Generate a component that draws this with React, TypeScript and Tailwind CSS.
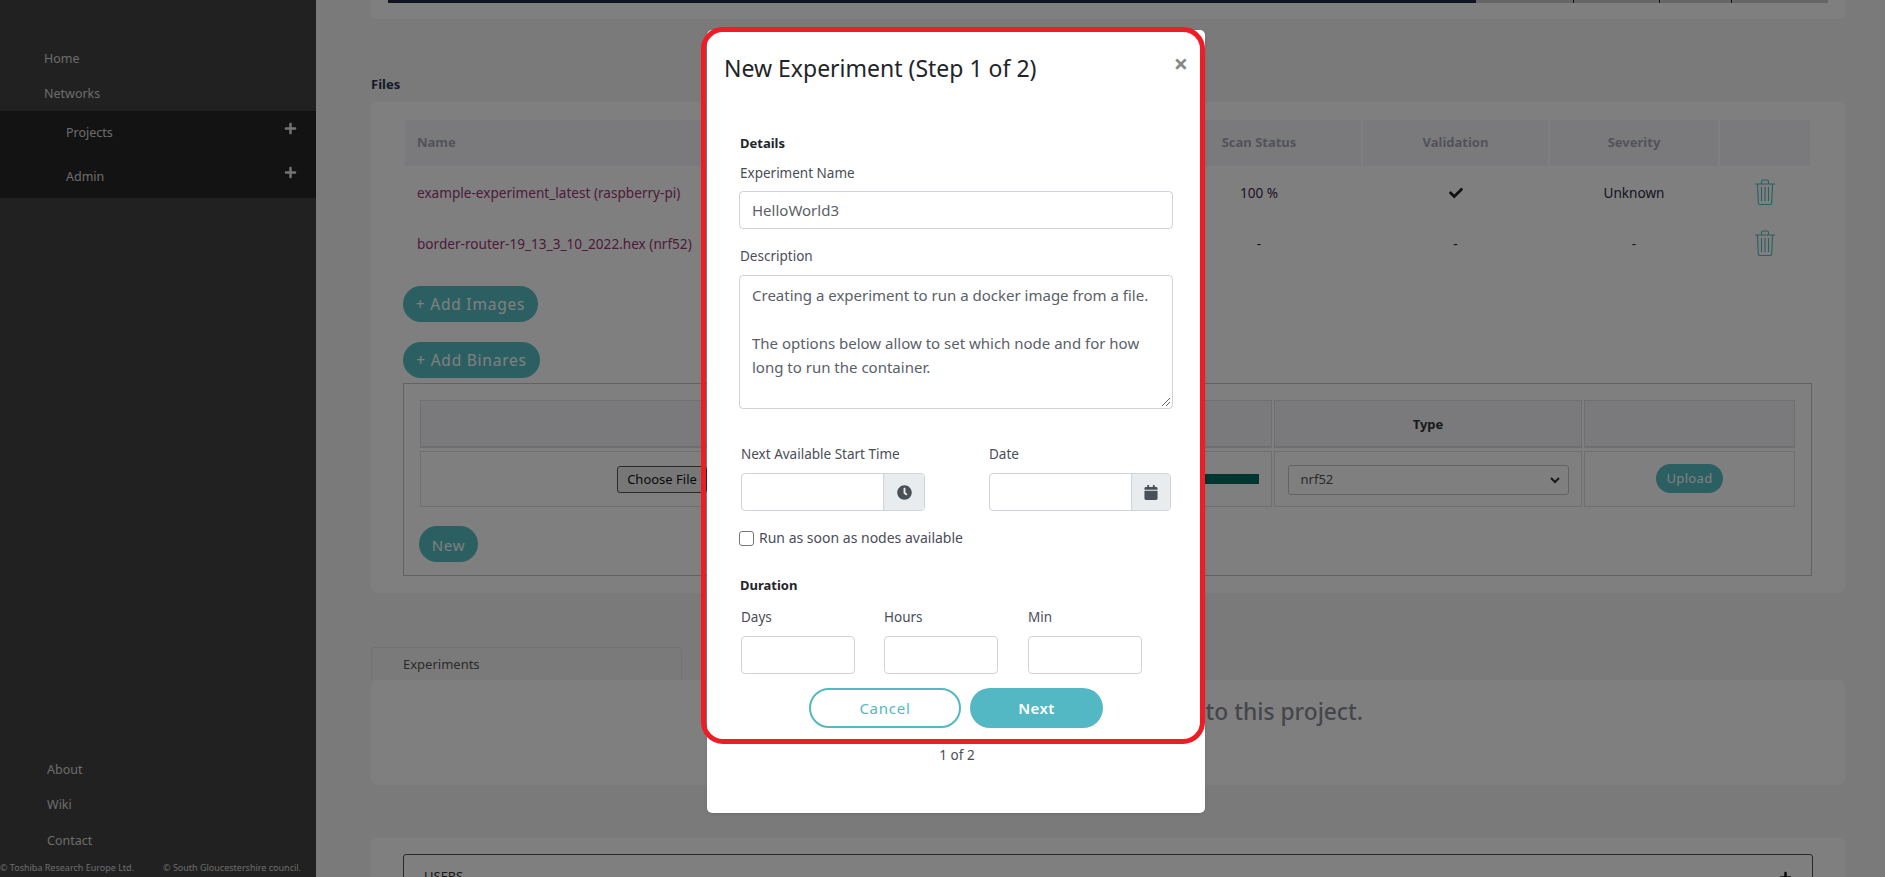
import { FaCalendar, FaCheck, FaClock, FaPlus } from "react-icons/fa";

const sans = "font-['Noto_Sans','Open_Sans',sans-serif]";

const fileRows = [
  { name: "example-experiment_latest (raspberry-pi)", scan: "100 %", ok: true, severity: "Unknown" },
  { name: "border-router-19_13_3_10_2022.hex (nrf52)", scan: "-", ok: false, severity: "-" },
];

function TrashIcon() {
  return (
    <svg width="20" height="26" viewBox="0 0 20 26" fill="none" stroke="#58bec5" strokeWidth="1.100">
      <path d="M0 5h20M6.500 5V2.500q0-1.500 1.500-1.500h4q1.500 0 1.500 1.500V5" />
      <path d="M2.500 5l.8 19q0 1.500 1.500 1.500h10.400q1.500 0 1.500-1.500l.8-19" />
      <path d="M6.500 8v14M10 8v14M13.500 8v14" />
    </svg>
  );
}

function PillButton({ children, className }: { children: React.ReactNode; className: string }) {
  return (
    <button className={`flex items-center justify-center rounded-full bg-[#58bec5] text-white ${className}`}>
      {children}
    </button>
  );
}

function Sidebar() {
  return (
    <aside className="w-[316px] shrink-0 h-full bg-[#424242] flex flex-col text-[12.500px] text-[#d8d8d8]">
      <div className="h-[42px]" />
      <a className="h-[35px] pl-[44px] flex items-center">Home</a>
      <a className="h-[34px] pl-[44px] flex items-center">Networks</a>
      <div className="h-[87px] bg-[#262626]">
        <div className="h-[44px] pl-[66px] pr-[19px] flex items-center justify-between">
          <span>Projects</span>
          <FaPlus className="w-[13px] h-[13px] text-[#e8e8e8] mb-[10px]" />
        </div>
        <div className="h-[43px] pl-[66px] pr-[19px] pt-[1px] flex items-center justify-between">
          <span>Admin</span>
          <FaPlus className="w-[13px] h-[13px] text-[#e8e8e8] mb-[10px]" />
        </div>
      </div>
      <div className="flex-1" />
      <a className="h-[35px] pl-[47px] flex items-center">About</a>
      <a className="h-[35px] pl-[47px] flex items-center">Wiki</a>
      <a className="h-[36px] pl-[47px] flex items-center">Contact</a>
      <div className="h-[18px] flex items-center gap-[29px] text-[9px] whitespace-nowrap">
        <span>© Toshiba Research Europe Ltd.</span>
        <span>© South Gloucestershire council.</span>
      </div>
    </aside>
  );
}

function FilesCard() {
  return (
    <div className="mt-[9px] h-[491px] bg-white rounded-md pt-[18px] pl-[32px] pr-[33px]">
      <div className="ml-[2px] grid grid-cols-[750px_204px_185px_168px_90px] gap-x-[2px] text-[13.600px]">
        <div className="h-[46px] bg-[#f5f5f9] pl-[12px] flex items-center text-[13px] font-bold text-[#a5a7b5]">Name</div>
        {["Scan Status", "Validation", "Severity", ""].map((h) => (
          <div key={h} className="h-[46px] bg-[#f5f5f9] flex items-center justify-center text-[13px] font-bold text-[#a5a7b5]">{h}</div>
        ))}
        {fileRows.map((r) => (
          <div key={r.name} className="contents">
            <div className="h-[51px] pt-[3px] pl-[12px] flex items-center text-[#9c3576] whitespace-nowrap">{r.name}</div>
            <div className="h-[51px] pt-[3px] flex items-center justify-center text-[#3a2a4a]">{r.scan}</div>
            <div className="h-[51px] pt-[3px] flex items-center justify-center text-[#222]">
              {r.ok ? <FaCheck className="w-[14px] h-[14px]" /> : "-"}
            </div>
            <div className="h-[51px] pt-[3px] flex items-center justify-center text-[#2a2a3a]">{r.severity}</div>
            <div className="h-[51px] flex items-center justify-center"><TrashIcon /></div>
          </div>
        ))}
      </div>
      <PillButton className="mt-[18px] w-[135px] h-[36px] pt-[2px] text-[15.500px] tracking-wider">+ Add Images</PillButton>
      <PillButton className="mt-[20px] w-[137px] h-[36px] pt-[2px] text-[15.500px] tracking-wider">+ Add Binares</PillButton>
      <div className="mt-[5px] h-[193px] border border-[#c4c4c4] pt-[16px] px-[16px]">
        <div className="grid grid-cols-[852px_308px_211px] gap-x-[2px] gap-y-[3px] w-[1375px]">
          <div className="h-[48px] bg-[#f5f5f9] border border-[#dedee2] border-b-2" />
          <div className="h-[48px] pt-[2px] bg-[#f5f5f9] border border-[#dedee2] border-b-2 flex items-center justify-center text-[13px] font-bold text-[#333]">Type</div>
          <div className="h-[48px] bg-[#f5f5f9] border border-[#dedee2] border-b-2" />
          <div className="h-[56px] border border-[#dedee2] flex items-center pl-[196px] pr-[12px]">
            <button className="h-[27px] w-[90px] pt-[1px] border border-[#555] rounded-[3px] bg-[#efefef] text-[13px] text-[#111]">Choose File</button>
            <div className="flex-1" />
            <div className="w-[400px] h-[10px] bg-[#006a60]" />
          </div>
          <div className="h-[56px] border border-[#dedee2] flex items-center justify-center">
            <div className="mt-[2px] w-[281px] h-[30px] border border-[#c6c6c8] rounded-[3px] pl-[12px] pr-[8px] flex items-center justify-between text-[13px] text-[#555]">
              nrf52
              <svg width="10" height="8" viewBox="0 0 10 8" fill="none" stroke="#333" strokeWidth="2"><path d="M1 2l4 4 4-4" /></svg>
            </div>
          </div>
          <div className="h-[56px] border border-[#dedee2] flex items-center justify-center">
            <PillButton className="w-[67px] h-[29px] text-[13px] tracking-wide mb-[1px]">Upload</PillButton>
          </div>
        </div>
        <PillButton className="mt-[19px] -ml-[1px] w-[59px] h-[36px] pt-[2px] text-[15px] tracking-wider">New</PillButton>
      </div>
    </div>
  );
}

function Backdrop() {
  return (
    <main className={`flex-1 h-full bg-[#f7f5f5] pl-[55px] pr-[40px] ${sans}`}>
      <div className="h-[19px] bg-white rounded-b-md px-[17px]">
        <div className="h-[3px] flex bg-[#1c2a3c]">
          <div className="w-[1088px]" />
          <div className="flex-1 bg-[#cccccc] flex">
            <div className="w-[98px] border-r border-[#222]" />
            <div className="w-[86px] border-r border-[#222]" />
            <div className="w-[72px] border-r border-[#222]" />
          </div>
        </div>
      </div>
      <p className="mt-[56px] h-[18px] text-[13px] leading-[18px] font-bold text-[#2a3350]">Files</p>
      <FilesCard />
      <div className="mt-[54px] ml-0 w-[311px] h-[33px] pt-[1px] border border-b-0 border-[#e6e6e6] rounded-t-[3px] pl-[31px] flex items-center text-[13px] text-[#555]">Experiments</div>
      <div className="h-[105px] bg-white rounded-md flex justify-end pr-[482px] pt-[15px] text-[22.800px] font-medium text-[#8b8b99] whitespace-nowrap">
        to this project.
      </div>
      <div className="mt-[53px] h-[60px] bg-white rounded-t-md pt-[16px] px-[32px]">
        <div className="h-[60px] border border-[#555] rounded-t-[3px] pl-[20px] pr-[20px] pt-[12px] flex justify-between text-[13px] text-[#333]">
          USERS
          <FaPlus className="w-[13px] h-[13px] text-[#111] mt-[4px]" />
        </div>
      </div>
    </main>
  );
}

function FieldLabel({ children, className }: { children: React.ReactNode; className?: string }) {
  return <p className={`text-[13.500px] leading-[18px] text-[#4a4d57] ${className ?? ""}`}>{children}</p>;
}

function Modal() {
  return (
    <div className={`absolute left-[707px] top-[30px] w-[498px] h-[783px] bg-white rounded-[5px] shadow-sm ${sans}`}>
      <div className="flex items-start justify-between pl-[17px] pr-[17px] pt-[21px]">
        <h2 className="text-[23px] leading-[34px] text-[#212529]">New Experiment (Step 1 of 2)</h2>
        <span className="text-[25px] leading-[24px] font-bold text-[#888]">×</span>
      </div>
      <div className="pl-[33px] pr-[32px] pt-[49px]">
        <p className="text-[13px] leading-[18px] font-bold text-[#212529]">Details</p>
        <FieldLabel className="mt-[12px]">Experiment Name</FieldLabel>
        <div className="-ml-[1px] mt-[9px] h-[38px] w-[434px] border border-[#ced4da] rounded-[4px] pl-[12px] flex items-center text-[15px] text-[#5a6068]">HelloWorld3</div>
        <FieldLabel className="mt-[18px]">Description</FieldLabel>
        <div className="relative -ml-[1px] mt-[10px] h-[134px] w-[434px] border border-[#ced4da] rounded-[4px] pl-[12px] pr-[20px] pt-[7px] text-[15px] leading-[24px] text-[#5a6068]">
          <p>Creating a experiment to run a docker image from a file.</p>
          <p className="mt-[24px]">The options below allow to set which node and for how long to run the container.</p>
          <svg className="absolute right-[1px] bottom-[1px]" width="10" height="10" viewBox="0 0 10 10" stroke="#666" strokeWidth="1"><path d="M1 9l8-8M5 9l4-4" /></svg>
        </div>
        <div className="mt-[36px] ml-[1px] flex gap-[64px]">
          <div>
            <FieldLabel>Next Available Start Time</FieldLabel>
            <div className="mt-[10px] w-[184px] h-[38px] flex border border-[#ced4da] rounded-[4px] overflow-hidden">
              <div className="flex-1" />
              <div className="w-[41px] bg-[#e9ecef] border-l border-[#ced4da] flex items-center justify-center">
                <FaClock className="w-[15px] h-[15px] text-[#495057]" />
              </div>
            </div>
          </div>
          <div>
            <FieldLabel>Date</FieldLabel>
            <div className="mt-[10px] w-[182px] h-[38px] flex border border-[#ced4da] rounded-[4px] overflow-hidden">
              <div className="flex-1" />
              <div className="w-[39px] bg-[#e9ecef] border-l border-[#ced4da] flex items-center justify-center">
                <FaCalendar className="w-[14px] h-[15px] text-[#495057]" />
              </div>
            </div>
          </div>
        </div>
        <div className="-ml-[1px] mt-[18px] flex items-center gap-[5px]">
          <span className="w-[15px] h-[15px] border border-[#767676] rounded-[3px]" />
          <span className="text-[14px] leading-[18px] text-[#4a4d57]">Run as soon as nodes available</span>
        </div>
        <p className="mt-[29px] text-[13px] leading-[18px] font-bold text-[#212529]">Duration</p>
        <div className="mt-[14px] ml-[1px] flex">
          {[{ l: "Days", w: "w-[143px]" }, { l: "Hours", w: "w-[144px]" }, { l: "Min", w: "w-[113px]" }].map((f) => (
            <div key={f.l} className={f.w}>
              <FieldLabel>{f.l}</FieldLabel>
              <div className="mt-[10px] w-[114px] h-[38px] border border-[#ced4da] rounded-[4px]" />
            </div>
          ))}
        </div>
      </div>
      <div className="mt-[14px] pl-[102px] flex gap-[9px]">
        <button className="w-[152px] h-[40px] rounded-full border-2 border-[#53b8c4] text-[15px] tracking-wider text-[#53b8c4]">Cancel</button>
        <button className="w-[133px] h-[40px] rounded-full bg-[#53b8c4] text-[15px] font-semibold tracking-wide text-white">Next</button>
      </div>
      <p className="mt-[17px] pl-[2px] text-center text-[13.500px] leading-[20px] text-[#4a4d57]">1 of 2</p>
    </div>
  );
}

export default function App() {
  return (
    <div className={`relative w-[1885px] h-[877px] overflow-hidden flex ${sans}`}>
      <Sidebar />
      <Backdrop />
      {/* dim layer behind the dialog */}
      <div className="absolute inset-0 bg-black/50" />
      <Modal />
      {/* red annotation drawn on the screenshot */}
      <div className="absolute left-[701px] top-[27px] w-[504px] h-[717px] border-[5px] border-[#ee1c25] rounded-[22px]" />
    </div>
  );
}
